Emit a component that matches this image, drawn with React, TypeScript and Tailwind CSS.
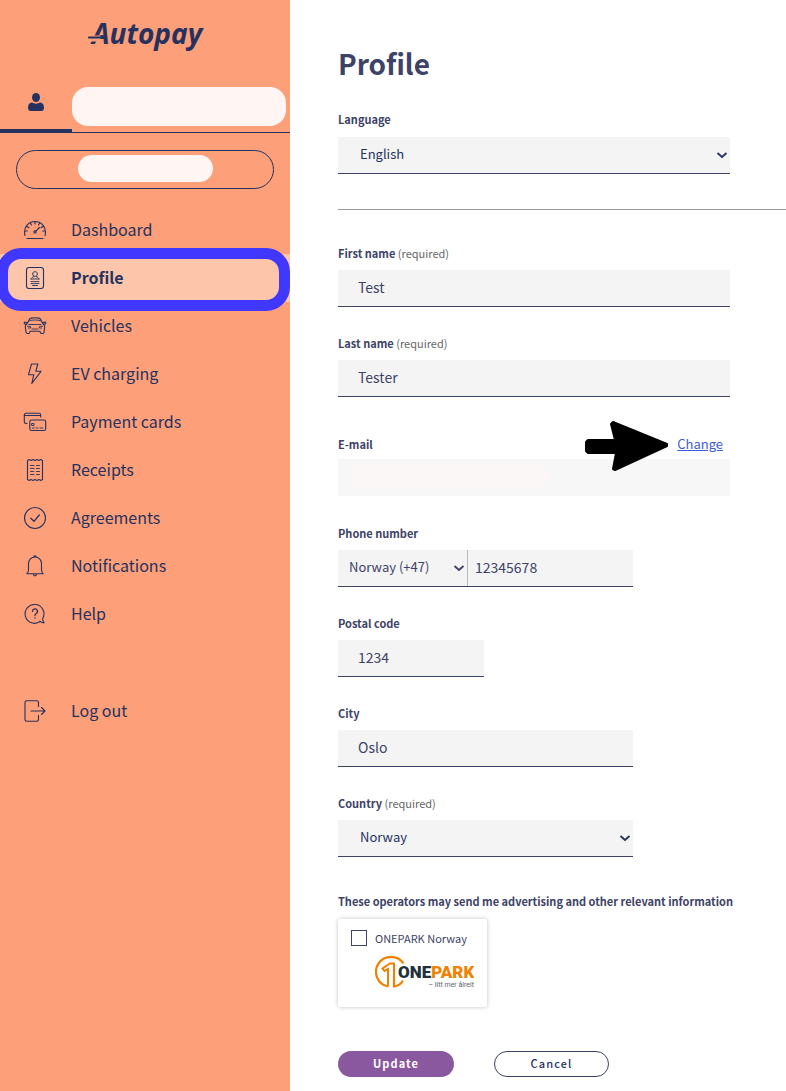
import type { ReactNode } from 'react';

interface NavItemProps {
  label: string;
  icon: ReactNode;
  active?: boolean;
}

interface FieldProps {
  id: string;
  label: string;
  required?: boolean;
  children: ReactNode;
}

interface SelectProps {
  id: string;
  options: string[];
  className?: string;
  textClass?: string;
}

const inputClass =
  'h-[37px] w-full rounded-none border-b border-[#3d4266] bg-[#f4f4f4] px-5 pb-0.5 text-sm text-[#3d4266] outline-none';

const labelClass = 'text-[11px] leading-[18px] font-bold';

const Icon = ({ children }: { children: ReactNode }) => (
  <svg
    width="24"
    height="24"
    viewBox="0 0 24 24"
    fill="none"
    stroke="currentColor"
    strokeWidth="1.1"
    strokeLinecap="round"
    strokeLinejoin="round"
    className="shrink-0"
    aria-hidden="true"
  >
    {children}
  </svg>
);

const navItems: NavItemProps[] = [
  {
    label: 'Dashboard',
    icon: (
      <Icon>
        <path d="M2 17.500C0 10 5 3.500 12 3.500s12 6.500 10 14M1.800 13h2.500M22.200 13h-2.500M4 8.500l2 1.200M20 8.500l-2 1.200M7.300 5l1.200 2M16.700 5l-1.200 2M12 3.500V6M4 20.500h16" />
        <path d="M12.800 13.200L16.500 9.500" />
        <circle cx="12" cy="14" r="1.100" />
      </Icon>
    ),
  },
  {
    label: 'Profile',
    active: true,
    icon: (
      <Icon>
        <rect x="3.500" y="1.500" width="17" height="21" rx="2.500" />
        <path
          d="M9.600 8a2.400 2.400 0 1 1 4.800 0a2.400 2.400 0 1 1-4.800 0M8 13c.2-1.500 1.500-1.700 2.700-2.300M16 13c-.2-1.500-1.500-1.700-2.700-2.300M8 13h8M8 15.600h8M8 17.600h8M9.500 19.500h5"
          strokeWidth="0.900"
        />
      </Icon>
    ),
  },
  {
    label: 'Vehicles',
    icon: (
      <Icon>
        <path d="M4.300 9.500L6.300 5.500c.4-.8 1-1.200 2-1.400 2.300-.5 5.100-.5 7.400 0 1 .2 1.600.6 2 1.400l2 4M4.300 9.500c-1.500.5-2 1.700-2 3.300l.7 5.500c0 .8.500 1.200 1.200 1.200h1.300c.8 0 1-.5 1.200-1.200l.3-1h10l.3 1c.2.700.4 1.200 1.200 1.200h1.300c.7 0 1.200-.4 1.200-1.200l.7-5.500c0-1.600-.5-2.800-2-3.300M4 8.500L1.400 8 1.200 9.700l2.500.9M20 8.500l2.600-.5.2 1.700-2.500.9" />
        <path d="M6.500 6.800c3-1.200 8-1.200 11 0M6 10.500h12M4.500 12.300h2.800l.5 1.700H5.300M19.500 12.300h-2.800l-.5 1.700h2.500M9 15h6" strokeWidth="0.900" />
      </Icon>
    ),
  },
  {
    label: 'EV charging',
    icon: (
      <Icon>
        <path d="M8.500 2h6.300l-2 7.300H18L8.800 21.500l2-8.800H5.500z" />
      </Icon>
    ),
  },
  {
    label: 'Payment cards',
    icon: (
      <Icon>
        <path d="M4 13.500H3A1.700 1.700 0 0 1 1.300 11.800V5A1.700 1.700 0 0 1 3 3.300h13A1.700 1.700 0 0 1 17.700 5v2M1.500 5.500h16" />
        <rect x="6.800" y="10" width="15.900" height="10.500" rx="1.800" />
        <path d="M9 13.500h2v2H9zM9.300 18h2M13 18h2M17 18h3" strokeWidth="0.900" />
      </Icon>
    ),
  },
  {
    label: 'Receipts',
    icon: (
      <Icon>
        <path d="M4.500 2.500l1.700-1 1.900 1 1.900-1 2 1 2-1 1.900 1 1.900-1 1.700 1v19l-1.700 1-1.900-1-1.900 1-2-1-2 1-1.900-1-1.900 1-1.700-1z" />
        <path d="M7.500 7.500H11M13.500 7.500h3M7.500 10.500H11M13.500 10.500h3M7.500 13.500H11M13.500 13.500h3M7.500 16.500H11M13.500 16.500h3" strokeWidth="0.900" />
      </Icon>
    ),
  },
  {
    label: 'Agreements',
    icon: (
      <Icon>
        <circle cx="12" cy="12" r="10.500" />
        <path d="M7.800 12.300l3.200 3L16.300 9" strokeWidth="1.300" />
      </Icon>
    ),
  },
  {
    label: 'Notifications',
    icon: (
      <Icon>
        <path d="M3.800 19.700h16.400c-1.200-1-1.700-2-1.700-4V9.500a6.500 6.500 0 0 0-13 0v6.200c0 2-.5 3-1.700 4zM10.700 3a1.300 1.300 0 0 1 2.600 0M10.500 20c0 2.500 3 2.500 3 0" />
      </Icon>
    ),
  },
  {
    label: 'Help',
    icon: (
      <Icon>
        <path d="M19.600 16.700a9.400 9.400 0 1 0-2.300 2.600c1.200 1.200 2.700 1.500 3.900 1.300-.9-.9-1.500-2.200-1.600-3.900z" />
        <path d="M9.500 9.300a2.500 2.500 0 1 1 3.700 2.200c-.8.500-1.200.8-1.200 2M12 16v.2" strokeWidth="1.300" />
      </Icon>
    ),
  },
];

const Logo = () => (
  <svg width="124" height="42" viewBox="0 0 124 42" role="img" aria-label="Autopay">
    <text
      x="9"
      y="31"
      fontSize="28"
      fontWeight="700"
      fontStyle="italic"
      fontFamily='"Open Sans", sans-serif'
      fill="#25325f"
    >
      Autopay
    </text>
    <path d="M5 22.500h12.500v6H5z" fill="#fd9f78" />
    <path d="M6 24.500h16" stroke="#25325f" strokeWidth="2.200" strokeLinecap="round" />
    <path d="M9 30h2" stroke="#25325f" strokeWidth="2.200" strokeLinecap="round" />
  </svg>
);

const NavItem = ({ label, icon, active }: NavItemProps) => (
  <li className={active ? 'relative bg-[#fdc5aa]' : ''}>
    <a href="#" className={`flex h-12 items-center gap-6 pl-[23px] text-base ${active ? 'font-bold' : ''}`}>
      {icon}
      <span className="pb-0.5">{label}</span>
    </a>
    {active && (
      <div className="pointer-events-none absolute -top-1.5 right-0 -bottom-[9px] -left-[3px] rounded-3xl border-[11px] border-[#4038ff]" />
    )}
  </li>
);

const Field = ({ id, label, required, children }: FieldProps) => (
  <div className="flex flex-col gap-2">
    <label htmlFor={id} className={labelClass}>
      {label}
      {required && <span className="font-normal text-[#666666]"> (required)</span>}
    </label>
    {children}
  </div>
);

const Select = ({ id, options, className = '', textClass = 'pl-[22px]' }: SelectProps) => (
  <div className={`grid items-center ${className}`}>
    <select
      id={id}
      className={`col-start-1 row-start-1 h-9 w-full appearance-none rounded-none bg-[#f4f4f4] pr-5 pb-0.5 text-[13px] outline-none ${textClass}`}
    >
      {options.map((option) => (
        <option key={option}>{option}</option>
      ))}
    </select>
    <svg
      width="12"
      height="8"
      viewBox="0 0 12 8"
      fill="none"
      stroke="currentColor"
      strokeWidth="1.800"
      className="pointer-events-none col-start-1 row-start-1 mr-0.5 justify-self-end"
      aria-hidden="true"
    >
      <path d="M1.500 2L6 6l4.500-4" />
    </svg>
  </div>
);

const OneparkLogo = () => (
  <svg width="102" height="35" viewBox="0 0 102 35" role="img" aria-label="ONEPARK">
    <g fill="none" stroke="#f08200" strokeWidth="2.200">
      <path d="M13 31.500A15 15 0 1 1 28.500 8.500M19 22V31.500c4-.5 7-2.500 9-6" />
      <path d="M13 31.500V14l-3.500 2-2-2.500L15 8.500h4V24" strokeWidth="2" />
    </g>
    <text x="23" y="23" fontSize="17" fontWeight="900" fontFamily='"Roboto", sans-serif' fill="#22303c">
      ONE<tspan fill="#f08200">PARK</tspan>
    </text>
    <text x="99" y="32" textAnchor="end" fontSize="7" fontFamily='"Roboto", sans-serif' fill="#5b636b">
      – litt mer ålreit
    </text>
  </svg>
);

export default function App() {
  return (
    <div className="flex min-h-screen bg-white font-['Noto_Sans_CJK_SC',sans-serif] text-[#3d4266]">
      <aside className="w-[290px] shrink-0 overflow-hidden bg-[#fd9f78] text-[#25325f]">
        <header className="flex h-[87px] justify-center pt-[13px]">
          <Logo />
        </header>

        <div className="flex h-[46px] items-start border-b border-[#25325f]">
          <div className="flex h-[46px] w-[72px] shrink-0 justify-center border-b-4 border-[#25325f] pt-1.5">
            <svg width="16" height="18" viewBox="0 0 16 18" fill="currentColor" aria-hidden="true">
              <ellipse cx="8" cy="4.500" rx="4" ry="4.500" />
              <path d="M4 9.500c2.500 1.500 5.500 1.500 8 0 2.800.3 4 2 4 5.500 0 2-1 3-3 3H3c-2 0-3-1-3-3 0-3.500 1.200-5.200 4-5.500z" />
            </svg>
          </div>
          <div className="mr-1 h-[39px] flex-1 rounded-2xl bg-[#fff5f3]" />
        </div>

        <div className="px-4 pt-[17px]">
          <button
            type="button"
            aria-label="Account"
            className="flex h-[39px] w-full justify-center rounded-full border border-[#25325f] pt-1"
          >
            <span className="h-[27px] w-[135px] rounded-2xl bg-[#fff5f3]" />
          </button>
        </div>

        <nav className="pt-[17px]">
          <ul>
            {navItems.map((item) => (
              <NavItem key={item.label} {...item} />
            ))}
          </ul>
          <ul className="mt-[49px]">
            <NavItem
              label="Log out"
              icon={
                <Icon>
                  <path d="M15.500 7.500V3.500c0-1-.7-1.700-1.700-1.700H3.700c-1 0-1.700.7-1.700 1.700v17c0 1 .7 1.700 1.700 1.700h10.100c1 0 1.700-.7 1.700-1.700v-4M8 12h14M18.500 8.500L22 12l-3.500 3.500" />
                </Icon>
              }
            />
          </ul>
        </nav>
      </aside>

      <main className="min-w-0 flex-1 pt-[43px] pb-3.5 pl-12">
        <h1 className="text-[28px] leading-10 font-bold">Profile</h1>

        <form onSubmit={(e) => e.preventDefault()}>
          <div className="mt-[27px] flex max-w-[392px] flex-col gap-[9px]">
            <label htmlFor="language" className={labelClass}>
              Language
            </label>
            <Select id="language" options={['English', 'Norsk']} className="border-b border-[#3d4266] text-[#25325f]" />
          </div>

          <hr className="mt-[35px] border-[#999999]" />

          <div className="mt-[34px] flex max-w-[392px] flex-col gap-[27px]">
            <Field id="first-name" label="First name" required>
              <input id="first-name" defaultValue="Test" required className={inputClass} />
            </Field>

            <Field id="last-name" label="Last name" required>
              <input id="last-name" defaultValue="Tester" required className={inputClass} />
            </Field>

            <div className="relative flex flex-col gap-1.5 pb-px">
              <div className="flex h-[29px] items-end justify-between pr-[7px]">
                <label htmlFor="email" className={labelClass}>
                  E-mail
                </label>
                <a href="#" className="text-[13px] leading-[18px] text-[#3b5bdb] underline">
                  Change
                </a>
              </div>
              <div className="grid items-center">
                <input
                  id="email"
                  type="email"
                  disabled
                  className="col-start-1 row-start-1 h-[37px] w-full bg-[#f7f7f7]"
                />
                <div className="col-start-1 row-start-1 mb-1 ml-[13px] h-[26px] w-[198px] rounded-full bg-[#fbf7f6]" />
              </div>
              <svg
                width="86"
                height="52"
                viewBox="0 0 86 52"
                className="pointer-events-none absolute -top-1 right-[60px]"
                aria-hidden="true"
              >
                <path
                  d="M4 20h27L27 4l2-2 54 22v2L31 50l-2-1 3-16H4l-2-2V22z"
                  fill="#000000"
                  stroke="#000000"
                  strokeWidth="2"
                  strokeLinejoin="round"
                />
              </svg>
            </div>

            <Field id="phone" label="Phone number">
              <div className="flex max-w-[295px] border-b border-[#3d4266] bg-[#f4f4f4]">
                <Select
                  id="country-code"
                  options={['Norway (+47)', 'Sweden (+46)']}
                  className="w-[130px] shrink-0 border-r border-[#bbbbbb]"
                  textClass="pl-[11px]"
                />
                <input
                  id="phone"
                  type="tel"
                  defaultValue="12345678"
                  className="h-9 w-full min-w-0 bg-transparent px-[7px] pb-0.5 text-sm outline-none"
                />
              </div>
            </Field>

            <Field id="postal-code" label="Postal code">
              <div className="max-w-[146px]">
                <input id="postal-code" defaultValue="1234" className={inputClass} />
              </div>
            </Field>

            <Field id="city" label="City">
              <div className="max-w-[295px]">
                <input id="city" defaultValue="Oslo" className={inputClass} />
              </div>
            </Field>

            <Field id="country" label="Country" required>
              <Select
                id="country"
                options={['Norway', 'Sweden']}
                className="max-w-[295px] border-b border-[#3d4266] text-[#25325f]"
              />
            </Field>
          </div>

          <fieldset className="mt-[35px]">
            <legend className={labelClass}>
              These operators may send me advertising and other relevant information
            </legend>
            <div className="mt-[9px] flex h-[88px] w-[149px] flex-col gap-[7px] rounded-xs bg-white pt-[9px] pl-[13px] shadow-[0_0_4px_rgba(0,0,0,0.25)]">
              <label className="flex items-center gap-2 text-[11px] leading-5">
                <input type="checkbox" className="size-4 appearance-none border border-[#3d4266]" />
                ONEPARK Norway
              </label>
              <div className="pl-6">
                <OneparkLogo />
              </div>
            </div>
          </fieldset>

          <div className="mt-11 flex gap-10">
            <button
              type="submit"
              className="h-[26px] w-[116px] rounded-full bg-[#8a589f] pb-0.5 text-[11px] font-bold tracking-widest text-white"
            >
              Update
            </button>
            <button
              type="button"
              className="h-[26px] w-[115px] rounded-full border border-[#3d4266] pb-0.5 text-[11px] font-medium tracking-widest text-[#25325f]"
            >
              Cancel
            </button>
          </div>
        </form>
      </main>
    </div>
  );
}
